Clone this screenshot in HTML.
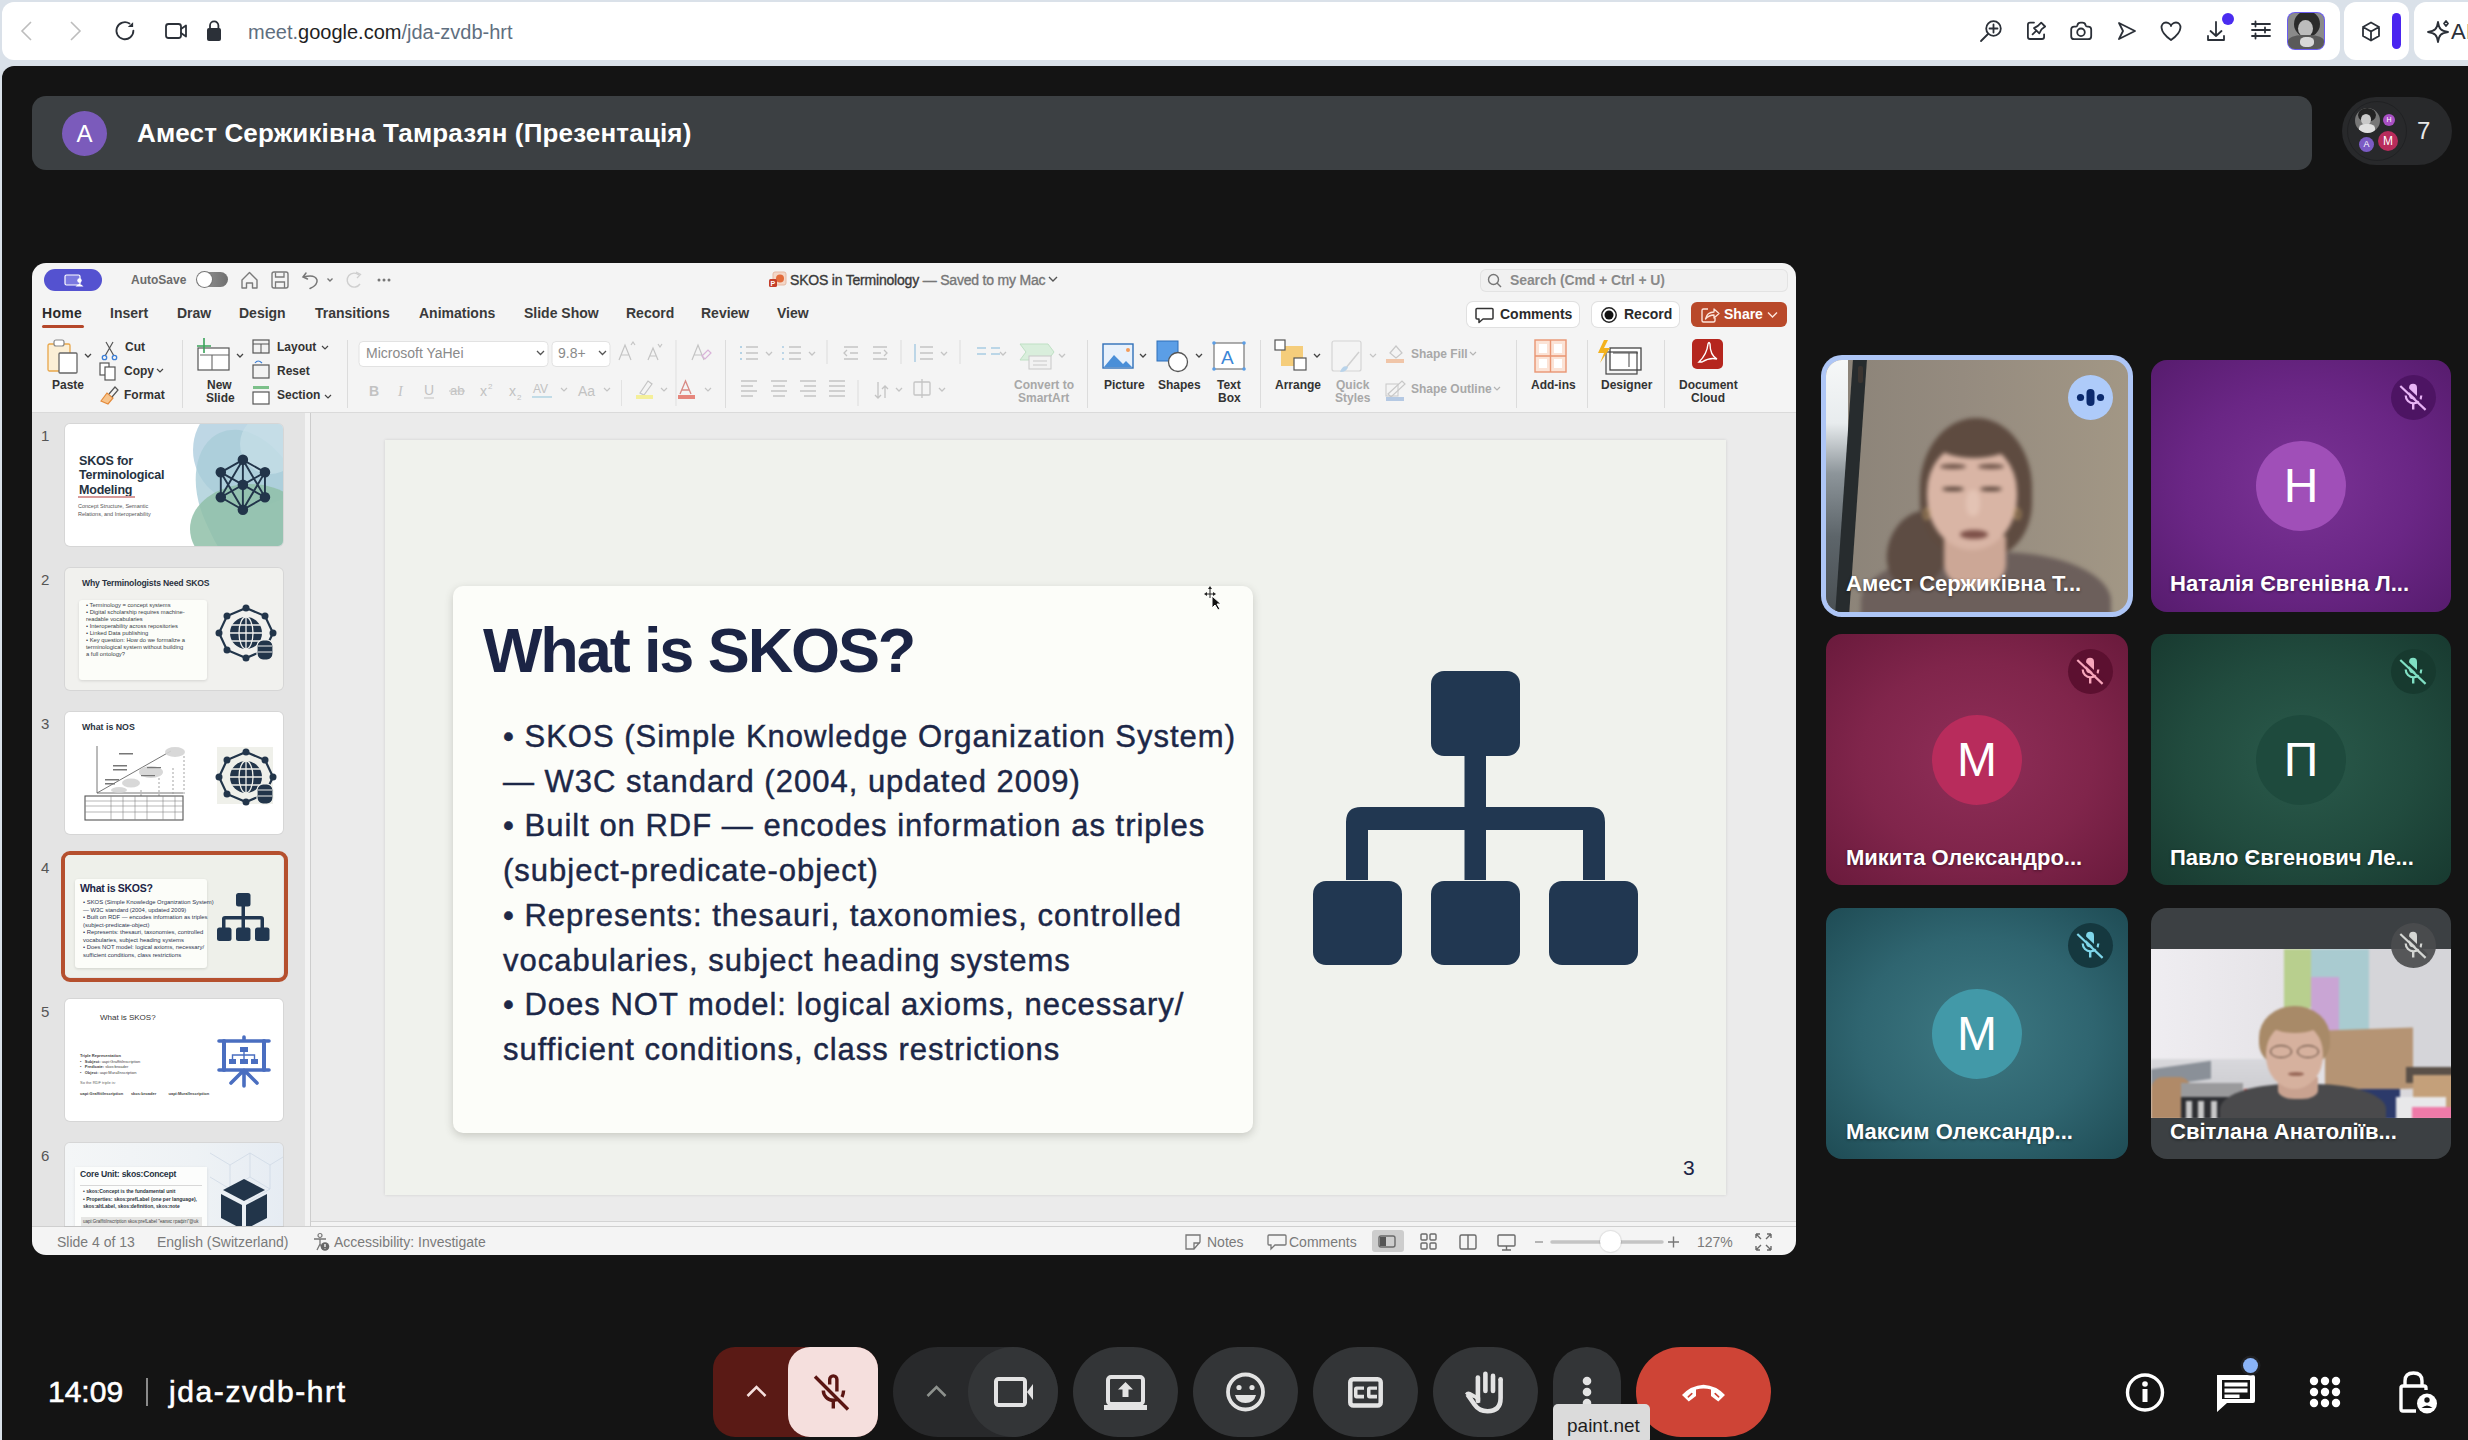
<!DOCTYPE html>
<html><head><meta charset="utf-8">
<style>
*{box-sizing:border-box;margin:0;padding:0}
html,body{width:2468px;height:1440px;overflow:hidden;background:#dae1e9;font-family:"Liberation Sans",sans-serif}
.a{position:absolute}
svg{position:absolute;overflow:visible}
.ic{fill:none;stroke:#2b3038;stroke-width:1.8;stroke-linecap:round;stroke-linejoin:round}
.tile{position:absolute;border-radius:16px;overflow:hidden}
.ttl{position:absolute;left:20px;top:214px;color:#fff;font-size:22px;font-weight:bold;text-shadow:0 1px 3px rgba(0,0,0,.45);white-space:nowrap;line-height:22px}
.av{position:absolute;border-radius:50%;color:#fff;text-align:center}
.mic{position:absolute;width:45px;height:45px;border-radius:50%}
.rb{position:absolute;font-size:13px;color:#2a2a2a;white-space:nowrap;line-height:14px}
.gr{color:#9a9a9a}
.tab{position:absolute;top:305px;font-size:14px;font-weight:bold;color:#3a3a3a;white-space:nowrap;line-height:16px}
.sep{position:absolute;width:1px;background:#d6d6d6}
.st{position:absolute;top:1234px;font-size:14px;color:#7a7a7a;white-space:nowrap;line-height:16px}
.bt{position:absolute;top:1347px;height:90px;border-radius:45px;background:#333537}
.thn{position:absolute;left:41px;font-size:15px;color:#555;line-height:15px}
.th{position:absolute;left:65px;width:218px;height:122px;border-radius:5px;overflow:hidden;background:#fff;box-shadow:0 0 0 1px rgba(0,0,0,.06)}
.bl{position:absolute;left:503px;font-size:31px;color:#1c2747;letter-spacing:1px;white-space:nowrap;line-height:45px;-webkit-text-stroke:.45px #1c2747}
</style></head><body>
<!-- ===== browser chrome ===== -->
<div class="a" style="left:2px;top:2px;width:2338px;height:58px;background:#fff;border-radius:12px"></div>
<div class="a" style="left:2344px;top:2px;width:65px;height:58px;background:#fff;border-radius:12px"></div>
<div class="a" style="left:2414px;top:2px;width:70px;height:58px;background:#fff;border-radius:12px"></div>
<svg style="left:0;top:0" width="600" height="64">
 <path d="M31 22 L22 31 L31 40" fill="none" stroke="#bdbdbd" stroke-width="1.6"/>
 <path d="M71 22 L80 31 L71 40" fill="none" stroke="#bdbdbd" stroke-width="1.6"/>
 <path d="M133.4 30.6 A8.5 8.5 0 1 1 129.5 23.6" class="ic" stroke-width="1.8" stroke-linecap="butt"/>
 <path d="M133.1 22.2 L133.1 27.1 L127.8 27.1 Z" fill="#2b3038"/>
 <rect x="166" y="24" width="15" height="14" rx="2.5" class="ic" stroke-width="1.7"/>
 <path d="M181 29 L186 25.5 L186 36.5 L181 33" class="ic" stroke-width="1.7"/>
 <path d="M210 29 V25.5 A4.2 4.2 0 0 1 218.4 25.5 V29" class="ic" stroke-width="2"/>
 <rect x="207" y="28" width="14" height="13" rx="2" fill="#2b3038"/>
</svg>
<div class="a" style="left:248px;top:20px;font-size:20px;line-height:24px;color:#5f6f80;white-space:nowrap">meet.<span style="color:#1f1f1f">google.com</span>/jda-zvdb-hrt</div>
<svg style="left:1960px;top:0" width="508" height="64">
 <circle cx="33.5" cy="28.5" r="7.3" class="ic" stroke-width="1.6"/>
 <path d="M33.5 24.5 V32.5 M29.5 28.5 H37.5 M28 34 L21 41" class="ic" stroke-width="1.6"/>
 <path d="M74 22.6 H70 Q67.9 22.6 67.9 24.7 V37 Q67.9 39 70 39 H82 Q84.1 39 84.1 37 V34.3" class="ic" stroke-width="1.7"/>
 <path d="M81.2 22.6 L85.1 26.5 L81.5 29.4 L79.3 33.4 L74 28.1 L77.9 25.9 Z M75.9 31.2 L72.6 34.4" class="ic" stroke-width="1.6"/>
 <path d="M111.2 29.6 Q111.2 26.6 114.2 26.6 H116 Q117 26.6 117.4 25.2 Q118 22.6 120.5 22.6 H122.5 Q125 22.6 125.6 25.2 Q126 26.6 127.4 26.6 H128.2 Q131.2 26.6 131.2 29.6 V36.2 Q131.2 39.2 128.2 39.2 H114.2 Q111.2 39.2 111.2 36.2 Z" class="ic" stroke-width="1.7"/>
 <circle cx="121" cy="32.3" r="3.8" class="ic" stroke-width="1.7"/>
 <path d="M159 23 L175 31 L159 39 L163 31 Z" class="ic" stroke-width="1.7"/>
 <path d="M211 40 C198 31 200.5 22.5 206 22.5 C209 22.5 211 25 211 26 C211 25 213 22.5 216 22.5 C221.5 22.5 224 31 211 40 Z" class="ic" stroke-width="1.7"/>
 <path d="M256 22 V36 M250.5 31 L256 36 L261.5 31 M248 36 V40 H264 V36" class="ic" stroke-width="1.7"/>
 <circle cx="268" cy="19" r="6" fill="#4a2cf0"/>
 <path d="M292 24 H310 M292 30 H310 M292 36 H310" class="ic" stroke-width="1.8"/>
 <path d="M295.5 21.5 V26.5 M305 27.5 V32.5 M295.5 33.5 V38.5" class="ic" stroke-width="1.8"/>
 <path d="M411 22.5 L419 27 V36 L411 40.5 L403 36 V27 Z M403 27 L411 31.5 L419 27 M411 31.5 V40.5" class="ic" stroke-width="1.6"/>
 <rect x="432" y="13" width="9" height="36" rx="4.5" fill="#4a25f0"/>
 <path d="M478 22 C479 29 481 31 488 32 C481 33 479 35 478 42 C477 35 475 33 468 32 C475 31 477 29 478 22 Z" class="ic" stroke-width="1.6"/>
 <path d="M486 21 L488 23.5 L486 26 L484 23.5 Z" class="ic" stroke-width="1.3"/>
</svg>
<div class="a" style="left:2451px;top:21px;font-size:22px;line-height:22px;color:#2b3038">AI</div>
<div class="a" style="left:2288px;top:13px;width:36px;height:36px;border-radius:7px;overflow:hidden;background:#8a8a8a;box-shadow:0 0 0 1px #6a5cf0">
 <div class="a" style="left:6px;top:-2px;width:26px;height:26px;border-radius:50%;background:#2a2a2a"></div>
 <div class="a" style="left:10px;top:7px;width:15px;height:17px;border-radius:50%;background:#bcbcbc"></div>
 <div class="a" style="left:0;top:22px;width:36px;height:16px;background:#5a5a5a;border-radius:40% 40% 0 0"></div>
 <div class="a" style="left:12px;top:24px;width:14px;height:10px;background:#d8d8d8;border-radius:40%"></div>
</div>

<!-- ===== meet dark area ===== -->
<div class="a" style="left:2px;top:66px;width:2466px;height:1374px;background:#141414;border-top-left-radius:12px"></div>
<div class="a" style="left:32px;top:96px;width:2280px;height:74px;background:#3c4043;border-radius:14px"></div>
<div class="av" style="left:62px;top:111px;width:45px;height:45px;background:#7b5bbb;font-size:24px;line-height:45px">A</div>
<div class="a" style="left:137px;top:118px;font-size:26px;font-weight:bold;color:#fff;white-space:nowrap;line-height:30px;letter-spacing:.15px">Амест Сержиківна Тамразян (Презентація)</div>
<div class="a" style="left:2342px;top:97px;width:110px;height:68px;border-radius:34px;background:#28292b"></div>
<div class="a" style="left:2347px;top:101px;width:60px;height:60px;border-radius:50%;border:1px solid #202123"></div>
<div class="av" style="left:2355px;top:108px;width:25px;height:25px;background:#777;overflow:hidden">
 <div class="a" style="left:3px;top:0;width:18px;height:14px;border-radius:50%;background:#222"></div>
 <div class="a" style="left:6px;top:6px;width:10px;height:11px;border-radius:50%;background:#c8c8c8"></div>
 <div class="a" style="left:4px;top:16px;width:16px;height:10px;border-radius:40%;background:#e0e0e0"></div>
</div>
<div class="av" style="left:2383px;top:114px;width:12px;height:12px;background:#a84fc4;font-size:7px;line-height:12px">H</div>
<div class="av" style="left:2359px;top:137px;width:15px;height:15px;background:#7b5bc4;font-size:9px;line-height:15px">A</div>
<div class="av" style="left:2378px;top:131px;width:20px;height:20px;background:#b82c5c;font-size:12px;line-height:20px">M</div>
<div class="a" style="left:2417px;top:118px;font-size:24px;color:#e8e8e8;line-height:26px">7</div>

<!-- ===== PowerPoint window ===== -->
<div id="ppt" class="a" style="left:32px;top:263px;width:1764px;height:992px;background:#f4f4f4;border-radius:14px;overflow:hidden"></div>
<!-- title row -->
<div class="a" style="left:44px;top:269px;width:58px;height:22px;border-radius:11px;background:#5452d0"></div>
<svg style="left:44px;top:269px" width="58" height="22">
 <rect x="21" y="6" width="15" height="10" rx="1.5" fill="#7b79e0" stroke="#fff" stroke-width="1.2"/>
 <circle cx="35.5" cy="11.5" r="2.2" fill="#fff"/><path d="M31.5 17.5 Q35.5 12.5 39.5 17.5 Z" fill="#fff"/>
</svg>
<div class="rb" style="left:131px;top:273px;font-size:12px;font-weight:bold;color:#6b6b6b">AutoSave</div>
<div class="a" style="left:197px;top:272px;width:31px;height:15px;border-radius:8px;background:linear-gradient(90deg,#9a9a9a,#6f6f6f)"></div>
<div class="a" style="left:197px;top:272px;width:15px;height:15px;border-radius:50%;background:#fff;box-shadow:0 0 0 1px #777"></div>
<svg style="left:236px;top:266px" width="170" height="28" class="">
 <path d="M6 14 L13.5 6.5 L21 14 V22 H16.5 V17 H10.5 V22 H6 Z" fill="none" stroke="#7a7a7a" stroke-width="1.4" stroke-linejoin="round"/>
 <rect x="36" y="6" width="16" height="16" rx="2" fill="none" stroke="#7a7a7a" stroke-width="1.4"/>
 <path d="M39.5 6.5 V11 H48 V6.5 M39.5 22 V16 H48.5 V22" fill="none" stroke="#7a7a7a" stroke-width="1.3"/>
 <path d="M70 7 L67 11 L71.5 13 M67.5 11 Q79 8 81 14 Q82 19 74 22.5" fill="none" stroke="#777" stroke-width="1.5" stroke-linecap="round"/>
 <path d="M91.5 12.5 L94 15 L96.5 12.5" fill="none" stroke="#777" stroke-width="1.4"/>
 <path d="M123 9 A7 7 0 1 0 124 18" fill="none" stroke="#cfcfcf" stroke-width="1.4"/><path d="M120 6 L124.5 8.5 L121 12" fill="none" stroke="#cfcfcf" stroke-width="1.3"/>
 <circle cx="143" cy="14" r="1.5" fill="#777"/><circle cx="148" cy="14" r="1.5" fill="#777"/><circle cx="153" cy="14" r="1.5" fill="#777"/>
</svg>
<svg style="left:768px;top:270px" width="20" height="20">
 <rect x="5" y="2" width="13" height="13" rx="2" fill="#f3d7c8" stroke="#e7b9a3"/><circle cx="12" cy="8.5" r="4" fill="#e36c3c"/><rect x="1" y="9" width="8" height="8" rx="1.5" fill="#c43e2a"/><text x="2.6" y="16" font-size="7" fill="#fff" font-family="Liberation Sans" font-weight="bold">P</text>
</svg>
<div class="rb" style="left:790px;top:273px;font-size:14px;color:#3a3a3a;letter-spacing:-.2px;-webkit-text-stroke:.35px #3a3a3a">SKOS in Terminology <span style="color:#777;-webkit-text-stroke:.35px #777">— Saved to my Mac</span></div>
<svg style="left:1047px;top:274px" width="12" height="10"><path d="M2 3 L6 7 L10 3" fill="none" stroke="#555" stroke-width="1.4"/></svg>
<div class="a" style="left:1480px;top:269px;width:308px;height:23px;border-radius:6px;background:#f1f1f1;box-shadow:inset 0 0 0 1px #e3e3e3"></div>
<svg style="left:1486px;top:272px" width="18" height="18"><circle cx="7.5" cy="7.5" r="5" fill="none" stroke="#777" stroke-width="1.4"/><path d="M11 11 L15 15" stroke="#777" stroke-width="1.5"/></svg>
<div class="rb" style="left:1510px;top:273px;font-size:14px;font-weight:bold;color:#8a8a8a;letter-spacing:-.1px">Search (Cmd + Ctrl + U)</div>

<!-- tabs -->
<div class="tab" style="left:42px;color:#2a2a2a;letter-spacing:.3px">Home</div>
<div class="a" style="left:42px;top:325px;width:42px;height:3px;border-radius:2px;background:#b5472a"></div>
<div class="tab" style="left:110px">Insert</div>
<div class="tab" style="left:177px">Draw</div>
<div class="tab" style="left:239px">Design</div>
<div class="tab" style="left:315px">Transitions</div>
<div class="tab" style="left:419px">Animations</div>
<div class="tab" style="left:524px">Slide Show</div>
<div class="tab" style="left:626px">Record</div>
<div class="tab" style="left:701px">Review</div>
<div class="tab" style="left:777px">View</div>
<div class="a" style="left:1467px;top:302px;width:112px;height:25px;border-radius:6px;background:#fff;box-shadow:0 0 0 1px #e0e0e0"></div>
<svg style="left:1474px;top:305px" width="22" height="20"><path d="M3 3.5 H18 Q19 3.5 19 4.5 V13 Q19 14 18 14 H9 L5 17.5 V14 H3 Q2 14 2 13 V4.5 Q2 3.5 3 3.5 Z" fill="none" stroke="#333" stroke-width="1.5" stroke-linejoin="round"/></svg>
<div class="rb" style="left:1500px;top:307px;font-size:14px;font-weight:bold;color:#2a2a2a">Comments</div>
<div class="a" style="left:1592px;top:302px;width:87px;height:25px;border-radius:6px;background:#fff;box-shadow:0 0 0 1px #e0e0e0"></div>
<svg style="left:1600px;top:306px" width="18" height="18"><circle cx="9" cy="9" r="7.2" fill="none" stroke="#222" stroke-width="1.5"/><circle cx="9" cy="9" r="4.5" fill="#111"/></svg>
<div class="rb" style="left:1624px;top:307px;font-size:14px;font-weight:bold;color:#2a2a2a">Record</div>
<div class="a" style="left:1691px;top:302px;width:96px;height:25px;border-radius:6px;background:#b9492a"></div>
<svg style="left:1700px;top:305px" width="22" height="20"><path d="M8 4 H3.5 Q2 4 2 5.5 V15.5 Q2 17 3.5 17 H13.5 Q15 17 15 15.5 V13" fill="none" stroke="#fde5dc" stroke-width="1.4"/><path d="M5.5 14 Q7 7 14 7 V4 L19 8.5 L14 13 V10 Q9 10 5.5 14 Z" fill="none" stroke="#fde5dc" stroke-width="1.3" stroke-linejoin="round"/></svg>
<div class="rb" style="left:1724px;top:307px;font-size:14px;font-weight:bold;color:#fff">Share</div>
<svg style="left:1766px;top:310px" width="14" height="10"><path d="M2 2.5 L6.5 7 L11 2.5" fill="none" stroke="#fde5dc" stroke-width="1.4"/></svg>

<!-- ribbon -->
<svg style="left:40px;top:336px" width="1720" height="76" id="rib">
 <!-- paste -->
 <rect x="8" y="8" width="22" height="27" rx="1.5" fill="#fbefd6" stroke="#e8a64a" stroke-width="1.3"/>
 <rect x="14" y="4" width="10" height="6" rx="2" fill="#fff" stroke="#888" stroke-width="1.2"/>
 <rect x="19" y="17" width="18" height="20" rx="1" fill="#fff" stroke="#666" stroke-width="1.3"/>
 <path d="M45 18 L48 21 L51 18" fill="none" stroke="#444" stroke-width="1.3"/>
 <!-- cut/copy/format -->
 <path d="M66 6 L74 20 M73 6 L65 20" stroke="#555" stroke-width="1.2"/>
 <circle cx="64.5" cy="21.5" r="2.2" fill="none" stroke="#3c7fd6" stroke-width="1.3"/><circle cx="74.5" cy="21.5" r="2.2" fill="none" stroke="#3c7fd6" stroke-width="1.3"/>
 <rect x="60" y="27" width="9" height="12" fill="#fff" stroke="#555" stroke-width="1.2"/><rect x="65" y="31" width="10" height="13" fill="#fff" stroke="#555" stroke-width="1.2"/>
 <path d="M117 33 L120 36 L123 33" fill="none" stroke="#444" stroke-width="1.2"/>
 <path d="M61 65 L67 57 L73 62 L68 68 Z" fill="#f7c48c" stroke="#e48a3a" stroke-width="1.2"/><path d="M69 58 L75 51 L78 54 L72 61" fill="none" stroke="#555" stroke-width="1.2"/>
 <!-- sep -->
 <rect x="142" y="4" width="1" height="68" fill="#dcdcdc"/>
 <!-- new slide -->
 <rect x="158" y="12" width="31" height="22" fill="#fff" stroke="#555" stroke-width="1.2"/>
 <path d="M160 19 H189 M172 19 V34" stroke="#666" stroke-width="1.1"/>
 <path d="M164 2 V17 M157 10 H171" stroke="#3aa35a" stroke-width="1.6"/>
 <path d="M197 18 L200 21 L203 18" fill="none" stroke="#444" stroke-width="1.3"/>
 <!-- layout reset section -->
 <rect x="213" y="4" width="16" height="13" fill="#f2f2f2" stroke="#555" stroke-width="1.2"/><path d="M213 8 H229 M221 8 V17" stroke="#555" stroke-width="1"/>
 <path d="M282 10 L285 13 L288 10" fill="none" stroke="#444" stroke-width="1.2"/>
 <rect x="213" y="29" width="16" height="13" fill="#f2f2f2" stroke="#555" stroke-width="1.2"/><path d="M215 27 Q218 23 222 27" fill="none" stroke="#3c7fd6" stroke-width="1.2"/>
 <rect x="213" y="50" width="16" height="3" fill="#7cc08a"/><rect x="213" y="56" width="16" height="12" fill="#fff" stroke="#555" stroke-width="1.2"/>
 <path d="M285 59 L288 62 L291 59" fill="none" stroke="#444" stroke-width="1.2"/>
 <rect x="307" y="4" width="1" height="68" fill="#dcdcdc"/>
 <!-- font boxes -->
 <rect x="319" y="5.5" width="189" height="25" rx="4" fill="#fff" stroke="#e2e2e2"/>
 <path d="M497 15 L500.5 18.5 L504 15" fill="none" stroke="#555" stroke-width="1.3"/>
 <rect x="512" y="5.5" width="58" height="25" rx="4" fill="#fff" stroke="#e2e2e2"/>
 <path d="M559 15 L562.5 18.5 L566 15" fill="none" stroke="#555" stroke-width="1.3"/>
 <g fill="none" stroke="#c4c4c4" stroke-width="1.2">
  <path d="M579 24 L585 9 L591 24 M581 19 H589 M591 9 L593 6 L595 9"/>
  <path d="M608 24 L613 12 L618 24 M610 20 H616 M618 8 L620 11 L622 8"/>
  <path d="M636 4 V70" stroke="#e2e2e2"/>
  <path d="M652 24 L658 9 L664 24 M654 19 H662"/><path d="M662 20 L668 14 L671 17 L665 23 Z" stroke="#d9b3d9"/>
 </g>
 <g font-family="Liberation Sans" fill="#c2c2c2" font-size="14">
  <text x="329" y="60" font-weight="bold">B</text><text x="358" y="60" font-style="italic" font-family="Liberation Serif">I</text>
  <text x="384" y="59">U</text><text x="410" y="59" font-size="13">ab</text>
  <text x="440" y="60">x</text><text x="448" y="53" font-size="8">2</text>
  <text x="469" y="60">x</text><text x="477" y="64" font-size="8">2</text>
  <text x="493" y="57" font-size="12">AV</text><text x="538" y="60" font-size="14">Aa</text>
 </g>
 <path d="M384 62 H394 M409 55 H425" stroke="#c2c2c2" stroke-width="1"/>
 <path d="M492 61 H512" stroke="#8fc3d9" stroke-width="1"/>
 <g fill="none" stroke="#c4c4c4" stroke-width="1.2"><path d="M521 52 L524 55 L527 52 M564 52 L567 55 L570 52 M621 52 L624 55 L627 52 M665 52 L668 55 L671 52"/></g>
 <rect x="581" y="44" width="1" height="26" fill="#e2e2e2"/>
 <path d="M600 57 L608 45 L612 48 L604 59 Z" fill="none" stroke="#c4c4c4" stroke-width="1.2"/><rect x="596" y="59" width="17" height="4" fill="#f4ef9a"/>
 <path d="M640 58 L645.5 45 L651 58 M642 54 H649" fill="none" stroke="#d88a84" stroke-width="1.3"/><rect x="638" y="59" width="17" height="4" fill="#e6867c"/>
 <rect x="685" y="4" width="1" height="68" fill="#dcdcdc"/>
 <!-- paragraph -->
 <g fill="none" stroke="#c4c4c4" stroke-width="1.3">
  <path d="M706 11 H718 M706 17 H718 M706 23 H718"/><path d="M700 11 H702 M700 17 H702 M700 23 H702" stroke="#9fc6e0"/>
  <path d="M726 16 L729 19 L732 16 M769 16 L772 19 L775 16 M901 16 L904 19 L907 16 M960 16 L963 19 L966 16 M1019 18 L1022 21 L1025 18"/>
  <path d="M749 11 H761 M749 17 H761 M749 23 H761"/><path d="M743 10 V12 M743 16 V18 M743 22 V24" stroke="#9fc6e0"/>
  <path d="M804 11 H818 M810 17 H818 M804 23 H818 M807 14 L804 17 L807 20" /><path d="M833 11 H847 M833 17 H841 M833 23 H847 M844 14 L847 17 L844 20"/>
  <path d="M787 4 V28 M861 4 V28 M920 4 V28" stroke="#e2e2e2"/>
  <path d="M880 11 H893 M880 17 H893 M880 23 H893"/><path d="M875 8 V26" stroke="#9fc6e0"/>
  <path d="M937 12 H946 M937 18 H946 M951 12 H960 M951 18 H960" stroke="#a8cbe2"/>
  <path d="M701 45 H717 M701 50 H713 M701 55 H717 M701 60 H713"/>
  <path d="M731 45 H747 M733 50 H745 M731 55 H747 M733 60 H745"/>
  <path d="M760 45 H776 M764 50 H776 M760 55 H776 M764 60 H776"/>
  <path d="M789 45 H805 M789 50 H805 M789 55 H805 M789 60 H805"/>
  <path d="M818 44 V70" stroke="#e2e2e2"/>
  <path d="M838 46 V62 M835 59 L838 62 L841 59 M845 62 V50 M842 53 L845 50 L848 53"/>
  <path d="M856 52 L859 55 L862 52 M899 52 L902 55 L905 52"/>
  <rect x="874" y="46" width="16" height="13" rx="1"/><path d="M882 43 V62"/>
 </g>
 <path d="M980 8 H1008 L1014 16 L1008 24 H980 L986 16 Z" fill="#d9eedc" stroke="#bfe0c4"/>
 <rect x="989" y="20" width="22" height="13" fill="#f2f2f2" stroke="#c8c8c8"/><path d="M993 25 H1007 M993 29 H1007" stroke="#c8c8c8"/>
 <rect x="1047" y="4" width="1" height="68" fill="#dcdcdc"/>
 <!-- picture shapes textbox -->
 <rect x="1063" y="8" width="30" height="24" fill="#e8f1fb" stroke="#2f6fb8" stroke-width="1.4"/>
 <path d="M1064 31 L1074 19 L1083 28 L1086 25 L1092 31 Z" fill="#4a8fd8"/><circle cx="1088" cy="14" r="2" fill="#f29b5a"/>
 <path d="M1100 18 L1103 21 L1106 18" fill="none" stroke="#444" stroke-width="1.3"/>
 <rect x="1117" y="5" width="21" height="20" fill="#5b9ee6" stroke="#2f6fb8"/><circle cx="1138" cy="26" r="9.5" fill="#fff" stroke="#555" stroke-width="1.3"/>
 <path d="M1156 18 L1159 21 L1162 18" fill="none" stroke="#444" stroke-width="1.3"/>
 <rect x="1174" y="7" width="30" height="26" fill="#fff" stroke="#777" stroke-width="1.2"/>
 <circle cx="1174" cy="7" r="1.8" fill="#5b9ee6"/><circle cx="1204" cy="7" r="1.8" fill="#5b9ee6"/><circle cx="1174" cy="33" r="1.8" fill="#5b9ee6"/><circle cx="1204" cy="33" r="1.8" fill="#5b9ee6"/>
 <text x="1181" y="28" font-family="Liberation Sans" font-size="19" fill="#3b86d6">A</text>
 <rect x="1220" y="4" width="1" height="68" fill="#dcdcdc"/>
 <!-- arrange -->
 <rect x="1241" y="10" width="22" height="20" fill="#f5cd7b"/><rect x="1235" y="4" width="10" height="10" fill="#fff" stroke="#555" stroke-width="1.2"/><rect x="1254" y="22" width="12" height="12" fill="#fff" stroke="#555" stroke-width="1.2"/>
 <path d="M1274 18 L1277 21 L1280 18" fill="none" stroke="#444" stroke-width="1.3"/>
 <rect x="1292" y="5" width="29" height="30" rx="2" fill="none" stroke="#d4d4d4" stroke-width="1.2"/><path d="M1305 33 L1319 16" stroke="#d0d0d0" stroke-width="1.5"/><path d="M1300 36 Q1303 28 1308 31 Q1307 36 1300 36 Z" fill="#b8d3ea"/>
 <path d="M1330 18 L1333 21 L1336 18" fill="none" stroke="#c4c4c4" stroke-width="1.2"/>
 <path d="M1350 17 L1356 10 L1362 17 L1356 22 Z" fill="none" stroke="#c8c8c8" stroke-width="1.2"/><rect x="1346" y="23" width="18" height="4" fill="#f0c5a8"/>
 <path d="M1348 58 L1362 45 L1365 48 L1351 61 Z" fill="none" stroke="#c8c8c8" stroke-width="1.2"/><rect x="1346" y="48" width="12" height="12" fill="none" stroke="#c8c8c8"/><rect x="1346" y="61" width="18" height="4" fill="#b5c9e3"/>
 <rect x="1476" y="4" width="1" height="68" fill="#dcdcdc"/>
 <!-- addins -->
 <rect x="1495" y="4" width="31" height="32" fill="#fbe3d6" stroke="#e99572" stroke-width="1.4"/><path d="M1510.5 4 V36 M1495 20 H1526" stroke="#e99572" stroke-width="1.4"/>
 <rect x="1499" y="8" width="8" height="9" fill="#fff"/><rect x="1514" y="8" width="8" height="9" fill="#fff"/><rect x="1499" y="23" width="8" height="9" fill="#fff"/><rect x="1514" y="23" width="8" height="9" fill="#fff"/>
 <rect x="1547" y="4" width="1" height="68" fill="#dcdcdc"/>
 <rect x="1570" y="12" width="31" height="22" fill="#fff" stroke="#444" stroke-width="1.3"/><path d="M1573 17 H1598 M1589 17 V31" stroke="#555" stroke-width="1.1"/><rect x="1566" y="16" width="31" height="22" fill="none" stroke="#444" stroke-width="1.2"/>
 <path d="M1564 4 L1558 17 H1564 L1560 27 L1570 12 H1564 L1568 4 Z" fill="#f3b21e"/>
 <rect x="1624" y="4" width="1" height="68" fill="#dcdcdc"/>
 <rect x="1652" y="3" width="31" height="30" rx="5" fill="#b5261e"/>
 <path d="M1659 26 Q1667 18 1668 8 Q1669 5 1670 8 Q1670 19 1677 23 Q1670 21 1662 26 Z" fill="none" stroke="#fff" stroke-width="1.4"/>
</svg>
<div class="rb" style="left:52px;top:378px;font-size:12px;font-weight:bold;color:#333">Paste</div>
<div class="rb" style="left:125px;top:340px;font-size:12px;font-weight:bold;color:#333">Cut</div>
<div class="rb" style="left:124px;top:364px;font-size:12px;font-weight:bold;color:#333">Copy</div>
<div class="rb" style="left:124px;top:388px;font-size:12px;font-weight:bold;color:#333">Format</div>
<div class="rb" style="left:207px;top:378px;font-size:12px;font-weight:bold;color:#333">New</div>
<div class="rb" style="left:206px;top:391px;font-size:12px;font-weight:bold;color:#333">Slide</div>
<div class="rb" style="left:277px;top:340px;font-size:12px;font-weight:bold;color:#333">Layout</div>
<div class="rb" style="left:277px;top:364px;font-size:12px;font-weight:bold;color:#333">Reset</div>
<div class="rb" style="left:277px;top:388px;font-size:12px;font-weight:bold;color:#333">Section</div>
<div class="rb" style="left:366px;top:346px;font-size:14px;color:#8a8a8a">Microsoft YaHei</div>
<div class="rb" style="left:558px;top:346px;font-size:14px;color:#8a8a8a">9.8+</div>
<div class="rb" style="left:1014px;top:378px;font-size:12px;font-weight:bold;color:#a8a8a8">Convert to</div>
<div class="rb" style="left:1018px;top:391px;font-size:12px;font-weight:bold;color:#a8a8a8">SmartArt</div>
<div class="rb" style="left:1104px;top:378px;font-size:12px;font-weight:bold;color:#333">Picture</div>
<div class="rb" style="left:1158px;top:378px;font-size:12px;font-weight:bold;color:#333">Shapes</div>
<div class="rb" style="left:1217px;top:378px;font-size:12px;font-weight:bold;color:#333">Text</div>
<div class="rb" style="left:1218px;top:391px;font-size:12px;font-weight:bold;color:#333">Box</div>
<div class="rb" style="left:1275px;top:378px;font-size:12px;font-weight:bold;color:#333">Arrange</div>
<div class="rb" style="left:1336px;top:378px;font-size:12px;font-weight:bold;color:#a8a8a8">Quick</div>
<div class="rb" style="left:1335px;top:391px;font-size:12px;font-weight:bold;color:#a8a8a8">Styles</div>
<div class="rb" style="left:1411px;top:347px;font-size:12px;font-weight:bold;color:#a8a8a8">Shape Fill</div>
<div class="rb" style="left:1411px;top:382px;font-size:12px;font-weight:bold;color:#a8a8a8">Shape Outline</div>
<svg style="left:1468px;top:350px" width="40" height="44"><path d="M2 2 L5 5 L8 2 M26 37 L29 40 L32 37" fill="none" stroke="#b4b4b4" stroke-width="1.2"/></svg>
<div class="rb" style="left:1531px;top:378px;font-size:12px;font-weight:bold;color:#333">Add-ins</div>
<div class="rb" style="left:1601px;top:378px;font-size:12px;font-weight:bold;color:#333">Designer</div>
<div class="rb" style="left:1679px;top:378px;font-size:12px;font-weight:bold;color:#333">Document</div>
<div class="rb" style="left:1691px;top:391px;font-size:12px;font-weight:bold;color:#333">Cloud</div>

<!-- panes -->
<div class="a" style="left:32px;top:412px;width:1764px;height:1px;background:#dadada"></div>
<div class="a" style="left:32px;top:413px;width:273px;height:813px;background:#e4e4e4"></div>
<div class="a" style="left:305px;top:413px;width:5px;height:813px;background:#f3f3f3"></div>
<div class="a" style="left:310px;top:413px;width:1px;height:813px;background:#cdcdcd"></div>
<div class="a" style="left:311px;top:413px;width:1485px;height:808px;background:#ebebeb"></div>
<div class="a" style="left:311px;top:1221px;width:1485px;height:1px;background:#d4d4d4"></div>
<div class="a" style="left:311px;top:1222px;width:1485px;height:4px;background:#f3f3f3"></div>
<div class="a" style="left:32px;top:1226px;width:1764px;height:1px;background:#cfcfcf"></div>
<div class="thn" style="top:428px">1</div>
<div class="thn" style="top:572px">2</div>
<div class="thn" style="top:716px">3</div>
<div class="thn" style="top:860px">4</div>
<div class="thn" style="top:1004px">5</div>
<div class="thn" style="top:1148px">6</div>
<!-- thumb 1 -->
<div class="th" style="top:424px;height:122px">
 <div class="a" style="left:128px;top:-30px;width:120px;height:112px;border-radius:50%;background:#b7d3e2;opacity:.9"></div>
 <div class="a" style="left:136px;top:2px;width:100px;height:150px;border-radius:50% 50% 40% 40%;background:#a9cdd8;opacity:.8;transform:rotate(-25deg)"></div>
 <div class="a" style="left:125px;top:60px;width:120px;height:90px;border-radius:50%;background:#8fbfa8;opacity:.85"></div>
 <div class="a" style="left:175px;top:-10px;width:60px;height:60px;border-radius:50%;background:#c7dfe8;opacity:.7"></div>
 <div class="a" style="left:14px;top:29.5px;font-size:12.5px;font-weight:bold;color:#26323f;line-height:14.5px;letter-spacing:-.2px">SKOS for<br>Terminological<br>Modeling</div>
 <div class="a" style="left:13px;top:72px;width:57px;height:2px;background:#d99a9a"></div>
 <div class="a" style="left:13px;top:78px;font-size:5.5px;color:#555;line-height:8px;white-space:nowrap">Concept Structure, Semantic<br>Relations, and Interoperability</div>
 <svg style="left:151px;top:32px;transform:scale(.96);transform-origin:0 0" width="56" height="60"><g stroke="#22354a" stroke-width="2" fill="#22354a">
  <path d="M28 4 L5 17 L5 43 L28 56 L51 43 L51 17 Z M28 4 L28 56 M5 17 L51 43 M51 17 L5 43 M28 4 L5 43 M28 4 L51 43 M5 17 L28 56 M51 17 L28 56" fill="none"/>
  <circle cx="28" cy="4" r="4.5"/><circle cx="5" cy="17" r="4.5"/><circle cx="51" cy="17" r="4.5"/><circle cx="5" cy="43" r="4.5"/><circle cx="51" cy="43" r="4.5"/><circle cx="28" cy="56" r="4.5"/><circle cx="28" cy="30" r="4.5"/>
 </g></svg>
</div>
<!-- thumb 2 -->
<div class="th" style="top:568px;height:122px;background:#f1f1ee">
 <div class="a" style="left:17px;top:10px;font-size:8.6px;font-weight:bold;color:#2a3240;white-space:nowrap;letter-spacing:-.15px">Why Terminologists Need SKOS</div>
 <div class="a" style="left:14px;top:32px;width:128px;height:80px;background:#fcfdf9;border-radius:3px;box-shadow:0 1px 3px rgba(0,0,0,.12)"></div>
 <div class="a" style="left:21px;top:34px;font-size:5.8px;color:#3a3f47;line-height:7px;white-space:nowrap">• Terminology = concept systems<br>• Digital scholarship requires machine-<br>readable vocabularies<br>• Interoperability across repositories<br>• Linked Data publishing<br>• Key question: How do we formalize a<br>terminological system without building<br>a full ontology?</div>
 <svg style="left:153px;top:37px" width="58" height="58"><g fill="none" stroke="#22354a" stroke-width="2.2">
  <path d="M28 3 L47 11 L55 28 L47 45 L28 53 L9 45 L1 28 L9 11 Z"/></g>
  <circle cx="28" cy="28" r="16" fill="#22354a"/>
  <g fill="none" stroke="#f1f1ee" stroke-width="1.3"><ellipse cx="28" cy="28" rx="7" ry="16"/><path d="M28 12 V44 M12 28 H44 M14 20 H42 M14 36 H42"/></g>
  <g fill="#22354a"><circle cx="28" cy="3" r="3.5"/><circle cx="47" cy="11" r="3.5"/><circle cx="55" cy="28" r="3.5"/><circle cx="47" cy="45" r="3.5"/><circle cx="28" cy="53" r="3.5"/><circle cx="9" cy="45" r="3.5"/><circle cx="1" cy="28" r="3.5"/><circle cx="9" cy="11" r="3.5"/></g>
  <rect x="39" y="35" width="16" height="20" rx="6" fill="#22354a" stroke="#f1f1ee" stroke-width="1.2"/><path d="M40 41 H54 M40 47 H54" stroke="#f1f1ee" stroke-width="1"/>
 </svg>
</div>
<!-- thumb 3 -->
<div class="th" style="top:712px;height:122px">
 <div class="a" style="left:17px;top:10px;font-size:8.8px;font-weight:bold;color:#2a3240;white-space:nowrap">What is NOS</div>
 <svg style="left:18px;top:26px" width="116" height="84"><g fill="none" stroke="#666" stroke-width=".9">
  <path d="M14 8 V55 H100 M14 55 L88 13"/>
  <path d="M58 52 V58 M76 40 V58 M90 30 V58 M101 18 V58" stroke-dasharray="2 2" stroke="#999"/>
  <rect x="2" y="58" width="98" height="24" stroke="#555" stroke-width="1.1"/>
  <path d="M2 63 H100 M2 68 H100 M2 74 H100 M28 58 V82 M40 58 V82 M52 58 V82 M64 58 V82 M80 58 V82 M92 58 V82" stroke="#888" stroke-width=".6"/>
 </g>
 <g fill="#d4d4d4" opacity=".9"><ellipse cx="92" cy="14" rx="10" ry="5"/><ellipse cx="68" cy="34" rx="12" ry="6"/><ellipse cx="48" cy="45" rx="9" ry="4.5"/><ellipse cx="36" cy="52" rx="8" ry="3"/></g>
 <g fill="#777"><rect x="36" y="15" width="14" height="1.5"/><rect x="30" y="27" width="14" height="1.5"/><rect x="30" y="31" width="14" height="1.5"/><rect x="22" y="41" width="14" height="1.5"/><rect x="22" y="45" width="10" height="1.5"/><rect x="64" y="29" width="14" height="1.2"/><rect x="58" y="37" width="14" height="1.2"/></g>
 </svg>
 <div class="a" style="left:152px;top:35px;width:56px;height:57px;background:#eff0ea"></div>
 <svg style="left:153px;top:37px" width="58" height="58"><g fill="none" stroke="#22354a" stroke-width="2.2">
  <path d="M28 3 L47 11 L55 28 L47 45 L28 53 L9 45 L1 28 L9 11 Z"/></g>
  <circle cx="28" cy="28" r="16" fill="#22354a"/>
  <g fill="none" stroke="#eff0ea" stroke-width="1.3"><ellipse cx="28" cy="28" rx="7" ry="16"/><path d="M28 12 V44 M12 28 H44 M14 20 H42 M14 36 H42"/></g>
  <g fill="#22354a"><circle cx="28" cy="3" r="3.5"/><circle cx="47" cy="11" r="3.5"/><circle cx="55" cy="28" r="3.5"/><circle cx="47" cy="45" r="3.5"/><circle cx="28" cy="53" r="3.5"/><circle cx="9" cy="45" r="3.5"/><circle cx="1" cy="28" r="3.5"/><circle cx="9" cy="11" r="3.5"/></g>
  <rect x="39" y="35" width="16" height="20" rx="6" fill="#22354a" stroke="#eff0ea" stroke-width="1.2"/><path d="M40 41 H54 M40 47 H54" stroke="#eff0ea" stroke-width="1"/>
 </svg>
</div>
<!-- thumb 4 selected -->
<div class="a" style="left:61px;top:851px;width:227px;height:131px;border-radius:9px;border:4px solid #b5502e"></div>
<div class="th" style="top:855px;height:122px;background:#eef0ea;box-shadow:none;border-radius:5px">
 <div class="a" style="left:10px;top:24px;width:132px;height:89px;background:#fcfdf9;border-radius:3px;box-shadow:0 1px 3px rgba(0,0,0,.12)"></div>
 <div class="a" style="left:15px;top:27px;font-size:10.5px;font-weight:bold;color:#1b2445;white-space:nowrap;letter-spacing:-.3px">What is SKOS?</div>
 <div class="a" style="left:18px;top:44px;font-size:5.9px;color:#2c3550;line-height:7.5px;white-space:nowrap">• SKOS (Simple Knowledge Organization System)<br>— W3C standard (2004, updated 2009)<br>• Built on RDF — encodes information as triples<br>(subject-predicate-object)<br>• Represents: thesauri, taxonomies, controlled<br>vocabularies, subject heading systems<br>• Does NOT model: logical axioms, necessary/<br>sufficient conditions, class restrictions</div>
 <svg style="left:150px;top:36px" width="58" height="54"><g fill="#213751">
  <rect x="21" y="2" width="14.5" height="13.5" rx="2.5"/><rect x="26.5" y="14" width="3.5" height="24"/>
  <path d="M7 38 V28 Q7 25 10 25 H46 Q49 25 49 28 V38 H45.5 V28.5 H10.5 V38 Z"/>
  <rect x="2" y="36.5" width="14.5" height="13.5" rx="2.5"/><rect x="21" y="36.5" width="14.5" height="13.5" rx="2.5"/><rect x="40" y="36.5" width="14.5" height="13.5" rx="2.5"/>
 </g></svg>
</div>
<!-- thumb 5 -->
<div class="th" style="top:999px;height:122px">
 <div class="a" style="left:35px;top:14px;font-size:8px;color:#333;white-space:nowrap">What is SKOS?</div>
 <div class="a" style="left:15px;top:54px;font-size:4px;color:#444;line-height:5.6px;white-space:nowrap"><b>Triple Representation</b><br>•&nbsp;&nbsp;&nbsp;<b>Subject:</b> uapi:GraffitiInscription<br>•&nbsp;&nbsp;&nbsp;<b>Predicate:</b> skos:broader<br>•&nbsp;&nbsp;&nbsp;<b>Object:</b> uapi:MuralInscription</div>
 <div class="a" style="left:15px;top:81px;font-size:4px;color:#666;white-space:nowrap">So the RDF triple is:</div>
 <div class="a" style="left:15px;top:92px;font-size:4px;color:#444;white-space:nowrap;font-weight:bold">uapi:GraffitiInscription&nbsp;&nbsp;&nbsp;&nbsp;&nbsp;&nbsp;&nbsp;skos:broader&nbsp;&nbsp;&nbsp;&nbsp;&nbsp;&nbsp;&nbsp;&nbsp;&nbsp;&nbsp;&nbsp;uapi:MuralInscription</div>
 <svg style="left:150px;top:36px" width="58" height="54"><g fill="none" stroke="#4a6ec0" stroke-width="3.6" stroke-linecap="round">
  <path d="M4 6 H54 M4 35 H54 M29 2 V6 M29 35 V51 M29 35 L16 48 M29 35 L42 48"/>
  <path d="M9 6 V35 M49 6 V35" stroke-width="4"/>
 </g><g fill="#4a6ec0"><rect x="25" y="12" width="8" height="5"/><rect x="14" y="24" width="7" height="5"/><rect x="25" y="24" width="8" height="5"/><rect x="36" y="24" width="7" height="5"/></g>
 <path d="M29 17 V24 M17.5 24 V20 H39.5 V24" fill="none" stroke="#4a6ec0" stroke-width="1.4"/></svg>
</div>
<!-- thumb 6 -->
<div class="th" style="top:1143px;height:83px;background:linear-gradient(90deg,#f4f6f7 0%,#eef2f5 60%,#e6ecf3 100%);border-radius:5px 5px 0 0">
 <svg style="left:145px;top:0" width="73" height="83"><g fill="none" stroke="#cfd9e6" stroke-width=".8"><path d="M0 10 L20 22 L40 10 L60 22 L73 14 M20 22 V46 L40 58 L60 46 V22 M40 10 V34 L20 46 M40 34 L60 46 M0 34 L20 46"/></g></svg>
 <div class="a" style="left:10px;top:24px;width:132px;height:70px;background:#fcfdfc;box-shadow:0 1px 3px rgba(0,0,0,.1)"></div>
 <div class="a" style="left:15px;top:26px;font-size:8.6px;font-weight:bold;color:#26323f;white-space:nowrap;letter-spacing:-.2px">Core Unit: skos:Concept</div>
 <div class="a" style="left:15px;top:42px;width:122px;height:1px;background:#d8d8d8"></div>
 <div class="a" style="left:18px;top:45px;font-size:5px;font-weight:bold;color:#2c3440;line-height:7px;white-space:nowrap">• skos:Concept is the fundamental unit</div>
 <div class="a" style="left:18px;top:53px;font-size:5px;font-weight:bold;color:#2c3440;line-height:6.5px;white-space:nowrap">• Properties: skos:prefLabel (one per language),<br>skos:altLabel, skos:definition, skos:note</div>
 <div class="a" style="left:16px;top:74px;width:121px;height:12px;background:#e6e6e4"></div>
 <div class="a" style="left:18px;top:76px;font-size:4.5px;color:#444;white-space:nowrap">uapi:GraffitiInscription skos:prefLabel "напис графіті"@uk</div>
 <svg style="left:155px;top:36px" width="48" height="50"><g fill="#22354a">
  <path d="M24 0 L45 11 L24 22 L3 11 Z"/><path d="M1 15 L22 26 V50 L1 39 Z"/><path d="M26 26 L47 15 V39 L26 50 Z"/>
 </g></svg>
</div>

<!-- main slide -->
<div class="a" style="left:385px;top:440px;width:1341px;height:755px;background:#f0f2ed;box-shadow:0 0 3px rgba(0,0,0,.12)"></div>
<div class="a" style="left:453px;top:586px;width:800px;height:547px;border-radius:10px;background:#fcfdf9;box-shadow:0 3px 9px rgba(60,60,50,.22)"></div>
<div class="a" style="left:483px;top:612px;font-size:63px;font-weight:bold;color:#1b2445;letter-spacing:-2.1px;white-space:nowrap;line-height:76px">What is SKOS?</div>
<div class="bl" style="top:714px">• SKOS (Simple Knowledge Organization System)</div>
<div class="bl" style="top:759px">— W3C standard (2004, updated 2009)</div>
<div class="bl" style="top:803px">• Built on RDF — encodes information as triples</div>
<div class="bl" style="top:848px">(subject-predicate-object)</div>
<div class="bl" style="top:893px">• Represents: thesauri, taxonomies, controlled</div>
<div class="bl" style="top:938px">vocabularies, subject heading systems</div>
<div class="bl" style="top:982px">• Does NOT model: logical axioms, necessary/</div>
<div class="bl" style="top:1027px">sufficient conditions, class restrictions</div>
<svg style="left:1300px;top:660px" width="360" height="320">
 <g fill="#213751">
  <rect x="131" y="11" width="89" height="85" rx="13"/>
  <rect x="164.5" y="90" width="21.5" height="130"/>
  <path d="M46 220 V162 Q46 147 61 147 H290 Q305 147 305 162 V220 H283 V170 H68 V220 Z"/>
  <rect x="13" y="221" width="89" height="84" rx="13"/>
  <rect x="131" y="221" width="89" height="84" rx="13"/>
  <rect x="249" y="221" width="89" height="84" rx="13"/>
 </g>
</svg>
<div class="a" style="left:1683px;top:1156px;font-size:21px;color:#1b2445;line-height:24px">3</div>
<svg style="left:1200px;top:584px" width="24" height="24">
 <path d="M12 12 L12 24 L15 21 L18 26 L20 25 L17 20 L21 20 Z" fill="#111" stroke="#fff" stroke-width="1"/>
 <path d="M10 2 L8 5 H12 Z M4 10 L7 8 V12 Z M16 10 L13 8 V12 Z" fill="#222"/>
 <path d="M10 5 V14 M6 10 H14" stroke="#222" stroke-width="1"/>
</svg>

<!-- status bar -->
<div class="st" style="left:57px">Slide 4 of 13</div>
<div class="st" style="left:157px">English (Switzerland)</div>
<svg style="left:312px;top:1232px" width="20" height="20"><circle cx="8" cy="3.5" r="2" fill="none" stroke="#777" stroke-width="1.2"/><path d="M2 7 H14 M8 7 V12 L5 18 M8 12 L11 17" fill="none" stroke="#777" stroke-width="1.3"/><circle cx="13" cy="14.5" r="4.3" fill="#666"/><path d="M13 12 V15 M13 16.5 V17" stroke="#fff" stroke-width="1.3"/></svg>
<div class="st" style="left:334px">Accessibility: Investigate</div>
<svg style="left:1183px;top:1232px" width="200" height="20" fill="none" stroke="#777" stroke-width="1.3">
 <path d="M3 3 H17 V10 L11 17 H3 Z M11 17 V11 H17"/>
 <path d="M86 3 H102 Q103 3 103 4 V12 Q103 13 102 13 H92 L88 17 V13 H86 Q85 13 85 12 V4 Q85 3 86 3 Z"/>
</svg>
<div class="st" style="left:1207px">Notes</div>
<div class="st" style="left:1289px">Comments</div>
<div class="a" style="left:1372px;top:1230px;width:32px;height:22px;border-radius:3px;background:#cdcdcd"></div>
<svg style="left:1370px;top:1231px" width="420" height="22" fill="none" stroke="#6a6a6a" stroke-width="1.4">
 <rect x="9" y="5" width="16" height="11" rx="2"/><rect x="10" y="6" width="6" height="9" fill="#555" stroke="none"/>
 <rect x="51" y="3" width="6" height="6" rx="1"/><rect x="60" y="3" width="6" height="6" rx="1"/><rect x="51" y="12" width="6" height="6" rx="1"/><rect x="60" y="12" width="6" height="6" rx="1"/>
 <rect x="90" y="4" width="16" height="14" rx="1.5"/><path d="M98 4 V18"/>
 <rect x="128" y="4" width="17" height="11" rx="1"/><path d="M136.5 15 V19 M132 19 H141"/>
 <path d="M165 11 H173" stroke="#999"/>
 <path d="M182 11 H292" stroke="#c4c4c4" stroke-width="3.5" stroke-linecap="round"/>
 <path d="M298 11 H309 M303.5 5.5 V16.5" stroke="#777"/>
 <path d="M386 3 L391 8 M386 3 H390 M386 3 V7 M401 3 L396 8 M401 3 H397 M401 3 V7 M386 19 L391 14 M386 19 H390 M386 19 V15 M401 19 L396 14 M401 19 H397 M401 19 V15"/>
</svg>
<div class="a" style="left:1600px;top:1231px;width:21px;height:21px;border-radius:50%;background:#fff;box-shadow:0 0 1px 1px rgba(0,0,0,.08)"></div>
<div class="st" style="left:1697px">127%</div>


<!-- ===== tiles ===== -->
<!-- tile 1 speaking -->
<div class="a" style="left:1821px;top:355px;width:312px;height:262px;border-radius:21px;background:#aec6f6"></div>
<div class="tile" style="left:1826px;top:360px;width:302px;height:252px;background:linear-gradient(90deg,#8b8378 0%,#958b7f 45%,#a29785 100%)">
 <div class="a" style="left:0;top:0;width:22px;height:252px;background:linear-gradient(180deg,#f6f8f8 0%,#e8ecee 25%,#8d959a 45%,#5d656a 70%,#4a5054 100%)"></div>
 <div class="a" style="left:18px;top:-5px;width:14px;height:265px;background:#272c2e;transform:skewX(-4deg)"></div>
 <div class="a" style="left:32px;top:6px;width:5px;height:17px;background:#3a3430;border-radius:2px"></div>
 <div class="a" style="left:0;top:0;width:302px;height:252px;filter:blur(2px)">
  <div class="a" style="left:35px;top:192px;width:250px;height:110px;border-radius:45% 45% 0 0;background:#6c5f5b"></div>
  <div class="a" style="left:62px;top:150px;width:60px;height:80px;border-radius:50%;background:#5d4c43;transform:rotate(20deg)"></div>
  <div class="a" style="left:94px;top:58px;width:112px;height:140px;border-radius:50% 50% 40% 40%;background:#5e4b40"></div>
  <div class="a" style="left:118px;top:176px;width:62px;height:52px;border-radius:0 0 45% 45%;background:#cca796"></div>
  <div class="a" style="left:101px;top:84px;width:90px;height:106px;border-radius:45% 45% 50% 50%;background:#d9b5a5"></div>
  <div class="a" style="left:112px;top:72px;width:72px;height:26px;border-radius:50%;background:#5e4b40"></div>
  <div class="a" style="left:114px;top:104px;width:26px;height:5px;border-radius:50%;background:#6a5045"></div>
  <div class="a" style="left:152px;top:104px;width:26px;height:5px;border-radius:50%;background:#6a5045"></div>
  <div class="a" style="left:116px;top:127px;width:22px;height:4px;border-radius:50%;background:#4e3a30"></div>
  <div class="a" style="left:154px;top:127px;width:22px;height:4px;border-radius:50%;background:#4e3a30"></div>
  <div class="a" style="left:140px;top:130px;width:14px;height:26px;border-radius:40%;background:#e3c3b4"></div>
  <div class="a" style="left:134px;top:170px;width:28px;height:9px;border-radius:50%;background:#7d5048"></div>
  <div class="a" style="left:97px;top:148px;width:7px;height:12px;border-radius:50%;border:2px solid #b09060"></div>
  <div class="a" style="left:188px;top:148px;width:7px;height:12px;border-radius:50%;border:2px solid #b09060"></div>
 </div>
</div>
<div class="mic" style="left:2068px;top:375px;background:#aecbfa"></div>
<svg style="left:2068px;top:375px" width="45" height="45"><circle cx="12.5" cy="22.5" r="3.6" fill="#0b2a6e"/><rect x="18.5" y="14" width="8" height="17" rx="4" fill="#0b2a6e"/><circle cx="32.5" cy="22.5" r="3.6" fill="#0b2a6e"/></svg>
<div class="ttl" style="left:1846px;top:573px;position:absolute">Амест Сержиківна Т...</div>

<!-- tile 2 -->
<div class="tile" style="left:2151px;top:360px;width:300px;height:252px;background:radial-gradient(ellipse 70% 70% at 50% 50%,#7a3395 0%,#6a2685 55%,#571c6e 100%)"></div>
<div class="av" style="left:2256px;top:441px;width:90px;height:90px;background:#a04fb8;font-size:48px;line-height:90px">H</div>
<div class="mic" style="left:2391px;top:375px;background:#4d1463"></div>
<div class="ttl" style="left:2170px;top:573px;position:absolute">Наталія Євгенівна Л...</div>

<!-- tile 3 -->
<div class="tile" style="left:1826px;top:634px;width:302px;height:251px;background:radial-gradient(ellipse 70% 70% at 50% 50%,#8f2e58 0%,#80254b 55%,#6a1a3c 100%)"></div>
<div class="av" style="left:1932px;top:715px;width:90px;height:90px;background:#b82c5c;font-size:48px;line-height:90px">M</div>
<div class="mic" style="left:2068px;top:649px;background:#5c1030"></div>
<div class="ttl" style="left:1846px;top:847px;position:absolute">Микита Олександро...</div>

<!-- tile 4 -->
<div class="tile" style="left:2151px;top:634px;width:300px;height:251px;background:radial-gradient(ellipse 70% 70% at 50% 50%,#2a5a4b 0%,#214b3e 55%,#183a30 100%)"></div>
<div class="av" style="left:2256px;top:715px;width:90px;height:90px;background:#1e4a3d;font-size:48px;line-height:90px">П</div>
<div class="mic" style="left:2391px;top:649px;background:#173a2f"></div>
<div class="ttl" style="left:2170px;top:847px;position:absolute">Павло Євгенович Ле...</div>

<!-- tile 5 -->
<div class="tile" style="left:1826px;top:908px;width:302px;height:251px;background:radial-gradient(ellipse 70% 70% at 50% 50%,#3d7882 0%,#2f6570 55%,#1f4c55 100%)"></div>
<div class="av" style="left:1932px;top:989px;width:90px;height:90px;background:#4299a8;font-size:48px;line-height:90px">M</div>
<div class="mic" style="left:2068px;top:923px;background:#15383f"></div>
<div class="ttl" style="left:1846px;top:1121px;position:absolute">Максим Олександр...</div>

<!-- tile 6 -->
<div class="tile" style="left:2151px;top:908px;width:300px;height:251px;background:#3c4043">
 <div class="a" style="left:0;top:41px;width:300px;height:169px;overflow:hidden;background:linear-gradient(90deg,#efedf1 0%,#e4e2e6 50%,#d6d5d9 100%)">
  <div class="a" style="left:0;top:0;width:300px;height:169px;filter:blur(1.2px)">
   <div class="a" style="left:0;top:110px;width:130px;height:60px;background:linear-gradient(180deg,#d8d8dc,#c4c4c8)"></div>
   <div class="a" style="left:210px;top:0;width:92px;height:126px;background:#d5d5d9"></div>
   <div class="a" style="left:133px;top:0;width:27px;height:59px;background:#b8cf8e"></div>
   <div class="a" style="left:160px;top:0;width:58px;height:81px;background:#a9cbd0"></div>
   <div class="a" style="left:160px;top:28px;width:28px;height:55px;background:#c9a5d4"></div>
   <div class="a" style="left:174px;top:80px;width:88px;height:61px;background:#b59474;transform:skewY(-2deg)"></div>
   <div class="a" style="left:255px;top:118px;width:47px;height:16px;background:#5a5048"></div>
   <div class="a" style="left:262px;top:126px;width:40px;height:44px;background:#c4a07a"></div>
   <div class="a" style="left:0;top:116px;width:60px;height:18px;background:#8a9098;transform:skewY(-8deg)"></div>
   <div class="a" style="left:0;top:128px;width:40px;height:42px;background:#b08a68;border-radius:30% 30% 0 0"></div>
   <div class="a" style="left:30px;top:134px;width:62px;height:14px;background:#9a9a9c"></div>
   <div class="a" style="left:30px;top:148px;width:62px;height:22px;background:#2e2f33"></div>
   <div class="a" style="left:35px;top:152px;width:6px;height:18px;background:#c8c8c8"></div><div class="a" style="left:47px;top:152px;width:6px;height:18px;background:#c8c8c8"></div><div class="a" style="left:60px;top:152px;width:6px;height:18px;background:#c8c8c8"></div>
   <div class="a" style="left:93px;top:140px;width:22px;height:10px;background:#c8302a"></div>
   <div class="a" style="left:187px;top:140px;width:62px;height:30px;background:#2c3a6a"></div>
   <div class="a" style="left:245px;top:148px;width:50px;height:22px;background:#e8e8ea"></div>
   <div class="a" style="left:261px;top:158px;width:41px;height:12px;background:#ee7aa8"></div>
   <div class="a" style="left:69px;top:135px;width:166px;height:60px;border-radius:42% 42% 0 0;background:#4a4a4c"></div>
   <div class="a" style="left:127px;top:128px;width:40px;height:22px;background:#c9a290;border-radius:0 0 40% 40%"></div>
   <div class="a" style="left:108px;top:57px;width:71px;height:62px;border-radius:50% 50% 40% 40%;background:#a88a68"></div>
   <div class="a" style="left:115px;top:74px;width:57px;height:66px;border-radius:46% 46% 50% 50%;background:#d6b19e"></div>
   <div class="a" style="left:118px;top:64px;width:52px;height:20px;border-radius:50%;background:#a88a68"></div>
   <div class="a" style="left:119px;top:96px;width:22px;height:13px;border-radius:50%;border:1.5px solid #5a4538"></div>
   <div class="a" style="left:146px;top:96px;width:22px;height:13px;border-radius:50%;border:1.5px solid #5a4538"></div>
   <div class="a" style="left:137px;top:123px;width:16px;height:4px;border-radius:50%;background:#9a6a5a"></div>
  </div>
 </div>
</div>
<div class="mic" style="left:2391px;top:923px;background:#4b4c4e;opacity:.92"></div>
<div class="ttl" style="left:2170px;top:1121px;position:absolute">Світлана Анатоліїв...</div>
<svg style="left:0;top:0" width="2468" height="1440">
 <defs>
  <g id="micoff">
   <rect x="-4.4" y="-13.8" width="7.9" height="15.6" rx="3.95" fill="currentColor"/>
   <path d="M-7.8 -2 A7.8 7.8 0 0 0 7.8 -2" fill="none" stroke="currentColor" stroke-width="2.2"/>
   <path d="M-0.3 5.5 V12" stroke="currentColor" stroke-width="2.4"/>
   <path d="M-10.6 -13 L13.4 9.8" style="stroke:var(--bg)" stroke-width="2.6"/>
   <path d="M-12.4 -10.8 L11.3 11.6" stroke="currentColor" stroke-width="2.2" stroke-linecap="square"/>
  </g>
 </defs>
 <use href="#micoff" x="2413.5" y="397.5" style="color:#e8b4f5;--bg:#4d1463"/>
 <use href="#micoff" x="2090.5" y="671.5" style="color:#f7a6bb;--bg:#5c1030"/>
 <use href="#micoff" x="2413.5" y="671.5" style="color:#80e0c4;--bg:#173a2f"/>
 <use href="#micoff" x="2090.5" y="945.5" style="color:#7fd6ea;--bg:#15383f"/>
 <use href="#micoff" x="2413.5" y="945.5" style="color:#d4d6d3;--bg:#4b4c4e"/>
</svg>


<!-- ===== bottom bar ===== -->
<div class="a" style="left:48px;top:1375px;font-size:30px;color:#fff;line-height:34px;white-space:nowrap;-webkit-text-stroke:.6px #fff">14:09</div>
<div class="a" style="left:146px;top:1378px;width:2px;height:28px;background:#8a8a8a"></div>
<div class="a" style="left:169px;top:1375px;font-size:30px;color:#fff;line-height:34px;letter-spacing:1.6px;white-space:nowrap;-webkit-text-stroke:.6px #fff">jda-zvdb-hrt</div>
<!-- mic group -->
<div class="a" style="left:713px;top:1347px;width:165px;height:90px;border-radius:22px;background:#5a1a15"></div>
<div class="a" style="left:788px;top:1347px;width:90px;height:90px;border-radius:22px;background:#f5dfdd"></div>
<div class="a" style="left:893px;top:1347px;width:165px;height:90px;border-radius:45px;background:#28292b"></div>
<div class="a" style="left:968px;top:1347px;width:90px;height:90px;border-radius:45px;background:#333537"></div>
<div class="bt" style="left:1073px;width:105px"></div>
<div class="bt" style="left:1193px;width:105px"></div>
<div class="bt" style="left:1313px;width:105px"></div>
<div class="bt" style="left:1433px;width:105px"></div>
<div class="a" style="left:1553px;top:1347px;width:68px;height:90px;border-radius:34px;background:#333537"></div>
<div class="a" style="left:1636px;top:1347px;width:135px;height:90px;border-radius:45px;background:#ce4436"></div>
<svg style="left:0;top:1330px" width="2468" height="110">
 <path d="M747.5 66 L756.5 57 L765.5 66" fill="none" stroke="#f5dfdd" stroke-width="2.6"/>
 <g fill="none" stroke="#5a1512" stroke-width="3.4">
  <path d="M829.7 54.5 V49.5 A3.6 3.6 0 0 1 836.9 49.5 V61.5"/>
  <path d="M823.3 60.5 A10 10 0 0 0 833.3 70.3 Q836 70.3 838.5 69"/>
  <path d="M843.6 60.5 Q843.4 64 842 67"/>
  <path d="M833.3 70 V78.5"/>
  <path d="M815 46.5 L848 79.5"/>
 </g>
 <path d="M927.5 66 L936.5 57 L945.5 66" fill="none" stroke="#8d918d" stroke-width="2.6"/>
 <g fill="none" stroke="#e3e3e3" stroke-width="4">
  <rect x="996" y="49" width="29" height="26" rx="2.5"/>
 </g>
 <path d="M1027 62 L1033 54 V70 Z" fill="#e3e3e3"/>
 <g fill="none" stroke="#e3e3e3" stroke-width="4">
  <rect x="1108" y="47" width="35" height="27" rx="3"/>
  <circle cx="1245.5" cy="62" r="17.5" stroke-width="3.8"/>
  <rect x="1350.3" y="49.2" width="30.4" height="26.4" rx="3" stroke-width="4.5"/>
 </g>
 <rect x="1104" y="75" width="43" height="5" fill="#e3e3e3"/>
 <path d="M1125.5 52 L1133 59.5 H1128.5 V67 H1122.5 V59.5 H1118 Z" fill="#e3e3e3"/>
 <circle cx="1239" cy="57.5" r="2.6" fill="#e3e3e3"/><circle cx="1252" cy="57.5" r="2.6" fill="#e3e3e3"/>
 <path d="M1235 65 H1256 Q1254 73 1245.5 73 Q1237 73 1235 65 Z" fill="#e3e3e3"/>
 <path d="M1364 56.4 H1356.5 Q1354 56.4 1354 59 V65.8 Q1354 68.4 1356.5 68.4 H1364 V64.8 H1357.5 V59.8 H1364 Z M1377 56.4 H1369.5 Q1367 56.4 1367 59 V65.8 Q1367 68.4 1369.5 68.4 H1377 V64.8 H1370.5 V59.8 H1377 Z" fill="#e3e3e3"/>
 <g fill="none" stroke="#e3e3e3" stroke-width="4.6" stroke-linecap="round">
  <path d="M1477.9 47.5 V71"/><path d="M1485.4 43.8 V61" /><path d="M1493 45.9 V61"/>
  <path d="M1500.6 49.3 V68 Q1500.6 81.2 1487.5 81.2 Q1479 81.2 1474.5 74.5 L1467.5 64.5" stroke-linecap="butt"/>
 </g>
 <circle cx="1500.6" cy="49.3" r="2.3" fill="#e3e3e3"/>
 <path d="M1465 63.5 Q1467 60.5 1470.5 62 L1480.2 67.5 V73 L1474 68 L1468.5 67 Z" fill="#e3e3e3"/>
 <circle cx="1587" cy="51" r="4.3" fill="#e3e3e3"/><circle cx="1587" cy="62" r="4.3" fill="#e3e3e3"/><circle cx="1587" cy="73" r="4.3" fill="#e3e3e3"/>
 <path d="M1682 65 Q1691 55.5 1703.5 54.8 Q1716 55.5 1725 65 L1718.3 71.6 L1711 66 V59.5 Q1703.5 57.3 1696 59.5 V66 L1688.75 71.6 Z" fill="#fff"/>
 <path d="M1688.3 66.8 L1691.8 63.6 M1718.7 66.8 L1715.2 63.6" stroke="#ce4436" stroke-width="1.6" stroke-linecap="round"/>
 <!-- right -->
 <circle cx="2145" cy="62.5" r="17.5" fill="none" stroke="#fff" stroke-width="3.4"/>
 <rect x="2142.5" y="59" width="5" height="13" fill="#fff"/><circle cx="2145" cy="54" r="2.8" fill="#fff"/>
 <path d="M2217 45 H2253 Q2255 45 2255 47 V71 Q2255 73 2253 73 H2227 L2217 82 Z" fill="#fff"/>
 <rect x="2222" y="50" width="28" height="19" fill="#141414"/>
 <rect x="2224.5" y="52.5" width="23" height="4" fill="#fff"/><rect x="2224.5" y="58.5" width="23" height="4" fill="#fff"/><rect x="2224.5" y="64.5" width="15" height="3.5" fill="#fff"/>
 <circle cx="2250.5" cy="35.5" r="10" fill="#202124"/><circle cx="2250.5" cy="35.5" r="7.5" fill="#8ab4f8"/>
 <g fill="#fff">
  <circle cx="2314" cy="51" r="4.2"/><circle cx="2325" cy="51" r="4.2"/><circle cx="2336" cy="51" r="4.2"/>
  <circle cx="2314" cy="62" r="4.2"/><circle cx="2325" cy="62" r="4.2"/><circle cx="2336" cy="62" r="4.2"/>
  <circle cx="2314" cy="73" r="4.2"/><circle cx="2325" cy="73" r="4.2"/><circle cx="2336" cy="73" r="4.2"/>
 </g>
 <path d="M2416 56 V50 Q2416 43 2415 43" fill="none"/>
 <path d="M2405 56 V51 Q2405 43 2413.5 43 Q2422 43 2422 51 V56" fill="none" stroke="#fff" stroke-width="3.4"/>
 <path d="M2416 81 H2403 Q2401 81 2401 79 V58 Q2401 56 2403 56 H2424 Q2426 56 2426 58 V60" fill="none" stroke="#fff" stroke-width="3.4"/>
 <circle cx="2427" cy="73.5" r="10" fill="#fff"/>
 <circle cx="2427" cy="70" r="2.7" fill="#141414"/><path d="M2421.5 78 Q2427 73 2432.5 78 Z" fill="#141414"/>
</svg>
<div class="a" style="left:1553px;top:1404px;width:97px;height:40px;border-radius:5px;background:#dbdbdb"></div>
<div class="a" style="left:1567px;top:1415px;font-size:19px;color:#1e1e1e;line-height:22px">paint.net</div>

</body></html>
